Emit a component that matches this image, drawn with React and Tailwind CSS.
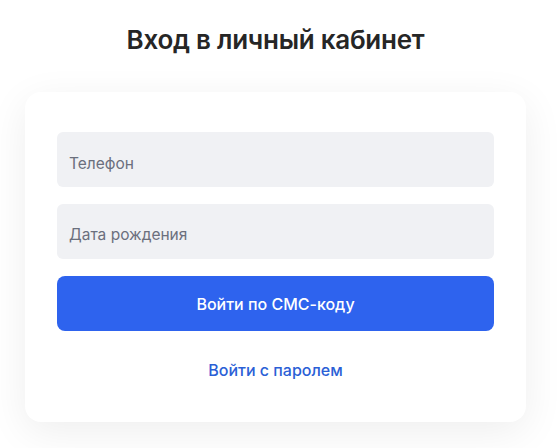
export default function App() {
    return (
        <div
            className="flex min-h-[448px] flex-col items-center bg-white pr-[6px] pt-6"
            style={{ fontFamily: "Inter, 'Noto Sans', sans-serif" }}
        >
            <h1 className="text-[26px] font-semibold leading-8 tracking-[-0.01em] text-[#262626]">
                Вход в личный кабинет
            </h1>
            <div className="mt-9 w-[501px] rounded-2xl bg-white px-8 pb-10 pt-10 shadow-[0_10px_40px_rgba(0,0,0,0.07)]">
                <div className="flex flex-col gap-[17px]">
                    <input
                        type="text"
                        placeholder="Телефон"
                        className="h-[55px] w-full rounded-md bg-[#f0f1f4] px-3 pt-[7px] text-[15.5px] text-[#2a2a2a] outline-none placeholder:text-[#6b6f7d]"
                    />
                    <input
                        type="text"
                        placeholder="Дата рождения"
                        className="h-[55px] w-full rounded-md bg-[#f0f1f4] px-3 pt-[6px] text-[15.5px] text-[#2a2a2a] outline-none placeholder:text-[#6b6f7d]"
                    />
                    <button className="h-[55px] w-full rounded-lg bg-[#2e63ee] text-base font-medium text-white">
                        Войти по СМС-коду
                    </button>
                </div>
                <div className="mt-[27px] text-center">
                    <a href="#" className="text-base font-medium leading-6 text-[#2b5fd6]">
                        Войти с паролем
                    </a>
                </div>
            </div>
        </div>
    );
}
